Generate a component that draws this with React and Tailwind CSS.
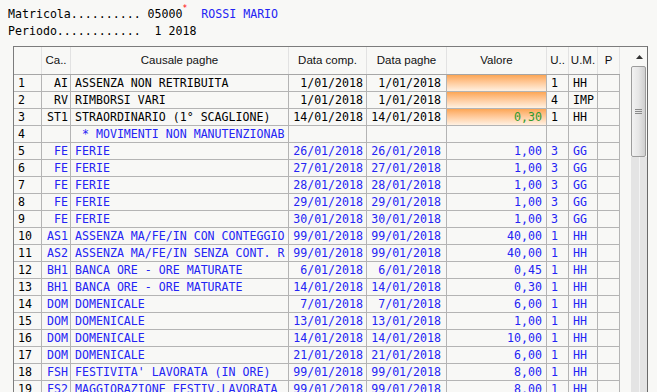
import React from 'react';

const COLS = [
  { w: 'w-[28px]', align: 'text-left pl-[4px]' },
  { w: 'w-[29px]', align: 'text-right pr-[2px]' },
  { w: 'w-[218px]', align: 'text-left pl-[4px]' },
  { w: 'w-[78px]', align: 'text-right pr-[3px]' },
  { w: 'w-[80px]', align: 'text-right pr-[5px]' },
  { w: 'w-[100px]', align: 'text-right pr-[4px]' },
  { w: 'w-[22px]', align: 'text-left pl-[4px]' },
  { w: 'w-[29px]', align: 'text-left pl-[4px]' },
  { w: 'w-[22px]', align: 'text-left pl-[4px]' },
];

const HEADERS = ['', 'Ca..', 'Causale paghe', 'Data comp.', 'Data paghe', 'Valore', 'U..', 'U.M.', 'P'];

const ROWS = [
  { ca: 'AI', desc: 'ASSENZA NON RETRIBUITA', comp: '1/01/2018', paghe: '1/01/2018', val: '', u: '1', um: 'HH', black: true, hl: true },
  { ca: 'RV', desc: 'RIMBORSI VARI', comp: '1/01/2018', paghe: '1/01/2018', val: '', u: '4', um: 'IMP', black: true, hl: true },
  { ca: 'ST1', desc: 'STRAORDINARIO (1° SCAGLIONE)', comp: '14/01/2018', paghe: '14/01/2018', val: '0,30', u: '1', um: 'HH', black: true, hl: true },
  { ca: '', desc: ' * MOVIMENTI NON MANUTENZIONAB', comp: '', paghe: '', val: '', u: '', um: '' },
  { ca: 'FE', desc: 'FERIE', comp: '26/01/2018', paghe: '26/01/2018', val: '1,00', u: '3', um: 'GG' },
  { ca: 'FE', desc: 'FERIE', comp: '27/01/2018', paghe: '27/01/2018', val: '1,00', u: '3', um: 'GG' },
  { ca: 'FE', desc: 'FERIE', comp: '28/01/2018', paghe: '28/01/2018', val: '1,00', u: '3', um: 'GG' },
  { ca: 'FE', desc: 'FERIE', comp: '29/01/2018', paghe: '29/01/2018', val: '1,00', u: '3', um: 'GG' },
  { ca: 'FE', desc: 'FERIE', comp: '30/01/2018', paghe: '30/01/2018', val: '1,00', u: '3', um: 'GG' },
  { ca: 'AS1', desc: 'ASSENZA MA/FE/IN CON CONTEGGIO', comp: '99/01/2018', paghe: '99/01/2018', val: '40,00', u: '1', um: 'HH' },
  { ca: 'AS2', desc: 'ASSENZA MA/FE/IN SENZA CONT. R', comp: '99/01/2018', paghe: '99/01/2018', val: '40,00', u: '1', um: 'HH' },
  { ca: 'BH1', desc: 'BANCA ORE - ORE MATURATE', comp: '6/01/2018', paghe: '6/01/2018', val: '0,45', u: '1', um: 'HH' },
  { ca: 'BH1', desc: 'BANCA ORE - ORE MATURATE', comp: '14/01/2018', paghe: '14/01/2018', val: '0,30', u: '1', um: 'HH' },
  { ca: 'DOM', desc: 'DOMENICALE', comp: '7/01/2018', paghe: '7/01/2018', val: '6,00', u: '1', um: 'HH' },
  { ca: 'DOM', desc: 'DOMENICALE', comp: '13/01/2018', paghe: '13/01/2018', val: '1,00', u: '1', um: 'HH' },
  { ca: 'DOM', desc: 'DOMENICALE', comp: '14/01/2018', paghe: '14/01/2018', val: '10,00', u: '1', um: 'HH' },
  { ca: 'DOM', desc: 'DOMENICALE', comp: '21/01/2018', paghe: '21/01/2018', val: '6,00', u: '1', um: 'HH' },
  { ca: 'FSH', desc: "FESTIVITA' LAVORATA (IN ORE)", comp: '99/01/2018', paghe: '99/01/2018', val: '8,00', u: '1', um: 'HH' },
  { ca: 'FS2', desc: 'MAGGIORAZIONE FESTIV.LAVORATA', comp: '99/01/2018', paghe: '99/01/2018', val: '8,00', u: '1', um: 'HH' },
];

const mono = "font-['DejaVu_Sans_Mono',monospace] text-[11.6px]";

function Row({ r, n }) {
  const color = r.black ? 'text-black' : 'text-[#2424f4]';
  const cells = [String(n), r.ca, r.desc, r.comp, r.paghe, r.val, r.u, r.um, ''];
  return (
    <div className="flex h-[17px] border-b border-[#b4b4b4]">
      {cells.map((c, i) => {
        const col = COLS[i];
        let extra = i === 0 ? 'text-black' : color;
        if (i === 5 && r.hl) extra = 'text-[#2e9a2e] bg-gradient-to-b from-[#fca654] to-[#fff1e2]';
        return (
          <div
            key={i}
            className={`${col.w} ${col.align} ${extra} shrink-0 h-full border-r border-[#b4b4b4] leading-[16px] whitespace-pre overflow-hidden`}
          >
            {c}
          </div>
        );
      })}
    </div>
  );
}

function Scrollbar() {
  return (
    <div className="w-[27px] shrink-0 flex">
      <div className="w-[11px]" />
      <div className="w-[16px] flex flex-col">
        <div className="h-[19px] flex items-center justify-center pl-[1px]">
          <svg width="7" height="4" viewBox="0 0 7 4">
            <path d="M3.5 0 L7 4 L0 4 Z" fill="#333" />
          </svg>
        </div>
        <div className="h-[91px] mr-[1px] rounded-[2px] border border-[#9c9c9c] bg-gradient-to-r from-[#f2f2f2] via-[#e6e6e6] to-[#cfcfcf] flex flex-col items-center justify-center gap-[1px]">
          <div className="w-[7px] h-px bg-[#8a8a8a]" />
          <div className="w-[7px] h-px bg-[#8a8a8a]" />
          <div className="w-[7px] h-px bg-[#8a8a8a]" />
        </div>
        <div className="flex-1 flex bg-[#e4e4e4]">
          <div className="w-[8px]" />
          <div className="w-px bg-[#f3f3f3]" />
        </div>
      </div>
    </div>
  );
}

export default function App() {
  return (
    <div className="w-[657px] h-[392px] overflow-hidden bg-[#f8f8f6] text-black">
      {/* Testata */}
      <div className={`${mono} pt-[6px] pl-[8px] leading-[17px] whitespace-pre`}>
        <div className="flex">
          <span>Matricola.......... 05000</span>
          <span className="text-[#ff0000] text-[8px] leading-[8px] -mt-[1px]">*</span>
          <span className="text-[#2424f4]">  ROSSI MARIO</span>
        </div>
        <div>Periodo............  1 2018</div>
      </div>

      {/* Griglia */}
      <div className="ml-[13px] mt-[6px] w-[635px] h-[400px] flex border-l border-t border-r border-l-[#7c7c7c] border-t-[#7c7c7c] border-r-[#6a6a6a]">
        <div className="w-[606px] shrink-0">
          <div className="flex h-[28px] border-b border-[#a6a6a6] font-['Liberation_Sans',Arial,sans-serif] text-[11.5px] text-[#111]">
            {HEADERS.map((h, i) => (
              <div
                key={i}
                className={`${COLS[i].w} shrink-0 h-full flex items-center justify-center border-r border-[#e2e2e2] ${i === 8 ? 'border-[#c8c8c8]' : ''}`}
              >
                {h}
              </div>
            ))}
          </div>
          <div className={mono}>
            {ROWS.map((r, i) => (
              <Row key={i} r={r} n={i + 1} />
            ))}
          </div>
        </div>
        <Scrollbar />
      </div>
    </div>
  );
}
